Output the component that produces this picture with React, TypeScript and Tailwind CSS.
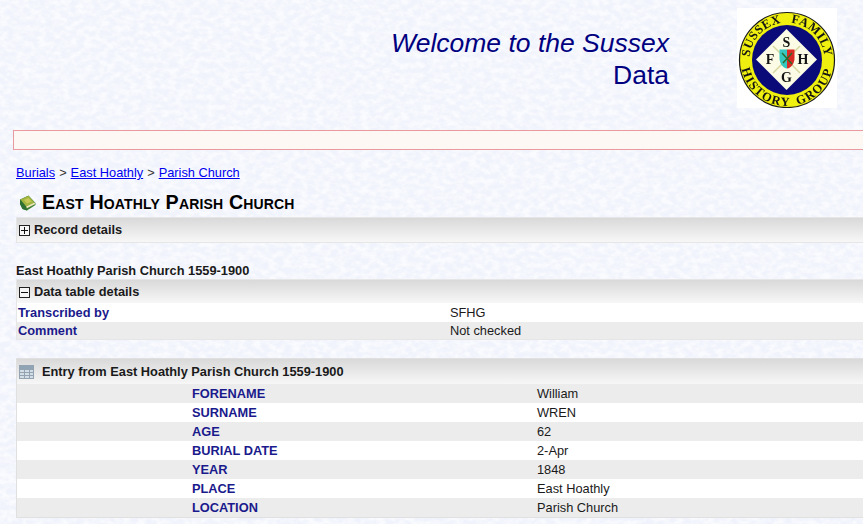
import React from "react";

const Logo = () => (
  <svg width="100" height="100" viewBox="0 0 100 100" className="block blur-[0.4px]">
    <rect width="100" height="100" fill="#fff" />
    <circle cx="50" cy="52" r="47.5" fill="#efef10" stroke="#1a1a1a" strokeWidth="1.2" />
    <circle cx="50" cy="52" r="35" fill="#0a0a78" />
    <polygon points="49.5,21 80,51.5 49.5,82 19,51.5" fill="#fcfce6" />
    <path d="M36 38 L63 65 M63 38 L36 65" stroke="#d6d6a0" strokeWidth="1.5" />
    <path d="M42.5 41.5 H50 V60.5 C46 60 42.5 56 42.5 50 Z" fill="#35c8c0" />
    <path d="M50 41.5 H57.5 V50 C57.5 56 54 60 50 60.5 Z" fill="#d92b25" />
    <path d="M45 45 L55 56 M55 45 L46 55" stroke="#2a6a2a" strokeWidth="1.4" />
    <defs>
      <path id="arcTop" d="M12.5 52 A37.5 37.5 0 0 1 87.5 52" />
      <path id="arcBottom" d="M4 52 A46 46 0 0 0 96 52" />
    </defs>
    <g fontFamily="'Liberation Serif', serif" fontWeight="700" fill="#141414">
      <text fontSize="12.5" letterSpacing="0.5" wordSpacing="6">
        <textPath href="#arcTop" startOffset="50%" textAnchor="middle">SUSSEX FAMILY</textPath>
      </text>
      <text fontSize="12.5" letterSpacing="1.4" wordSpacing="3">
        <textPath href="#arcBottom" startOffset="50%" textAnchor="middle">HISTORY GROUP</textPath>
      </text>
      <g fontSize="14" textAnchor="middle">
        <text x="49.5" y="38.5">S</text>
        <text x="49.5" y="74">G</text>
        <text x="33" y="56">F</text>
        <text x="66" y="56">H</text>
      </g>
    </g>
  </svg>
);

const Book = () => (
  <svg width="17" height="16" viewBox="0 0 17 16" className="block shrink-0">
    <path d="M1 4.5 L9.5 0.5 L16.5 8 L16.5 10 L8 15.5 L3.5 14 L1 9 Z" fill="#3f7f38" />
    <path d="M1.5 4.5 L9.5 0.8 L15.5 7.5 L7 11.5 Z" fill="#a2b53f" />
    <path d="M5 5 L9.5 3 L12.5 6.5 L8 8.5 Z" fill="#c9c95a" />
    <path d="M7 11.5 L15.5 7.5 L16.3 9 L7.8 13.2 Z" fill="#f0e6b8" />
    <path d="M1.2 4.8 L7 11.5 L8 15.5 L3.5 14 L1 9 Z" fill="#2f7033" />
  </svg>
);

const Plus = ({ minus }: { minus?: boolean }) => (
  <svg width="11" height="11" viewBox="0 0 11 11" className="block shrink-0">
    <rect x="0.5" y="0.5" width="10" height="10" fill="#f6f6f6" stroke="#222" />
    <path d={minus ? "M2 5.5 H9" : "M2 5.5 H9 M5.5 2 V9"} stroke="#111" />
  </svg>
);

const TableIcon = () => (
  <svg width="15" height="14" viewBox="0 0 15 14" className="block shrink-0">
    <rect x="0.5" y="0.5" width="14" height="13" fill="#d3dde6" stroke="#93a3b1" />
    <rect x="1" y="1" width="13" height="3" fill="#8fa5b6" />
    <path d="M0.5 4.5 H14.5 M0.5 7.5 H14.5 M0.5 10.5 H14.5 M5.5 1 V13 M10.5 1 V13" stroke="#93a3b1" />
  </svg>
);

const bar = "flex items-center bg-gradient-to-b from-[#d9d9d9] to-[#f7f7f7]";

const details: [string, string][] = [
  ["FORENAME", "William"],
  ["SURNAME", "WREN"],
  ["AGE", "62"],
  ["BURIAL DATE", "2-Apr"],
  ["YEAR", "1848"],
  ["PLACE", "East Hoathly"],
  ["LOCATION", "Parish Church"],
];

export default function App() {
  return (
    <div className="relative w-[863px] h-[524px] overflow-hidden bg-[#f0f3fc] font-['Liberation_Sans',Arial,sans-serif] text-[12.8px] text-[#1a1a1a]">
      <svg className="absolute inset-0 pointer-events-none" width="863" height="524" aria-hidden="true">
        <filter id="paper" x="0" y="0" width="100%" height="100%">
          <feTurbulence type="fractalNoise" baseFrequency="0.13 0.19" numOctaves="3" seed="7" />
          <feColorMatrix values="0 0 0 0 1  0 0 0 0 1  0 0 0 0 1  2.4 0 0 0 -0.8" />
        </filter>
        <rect width="863" height="524" filter="url(#paper)" opacity="0.7" />
      </svg>
      <div className="relative">
        <header className="flex h-[130px] pt-[8px]">
          <div className="w-[669px] pt-[19px] text-right text-[26.5px] leading-[32px] text-[#000080]">
            <div className="italic">Welcome to the Sussex</div>
            <div>Data</div>
          </div>
          <div className="ml-[68px]"><Logo /></div>
        </header>

        <div className="ml-[13px] h-[20px] w-[860px] border border-[#e89a9f] bg-[#fdf8f3]" />

        <nav className="ml-[16px] mt-[14px] flex h-[17px] gap-[4px] leading-[17px] text-[#333]">
          <a className="text-[#0000ee] underline" href="#">Burials</a>
          <span>&gt;</span>
          <a className="text-[#0000ee] underline" href="#">East Hoathly</a>
          <span>&gt;</span>
          <a className="text-[#0000ee] underline" href="#">Parish Church</a>
        </nav>

        <h1 className="ml-[19px] mt-[10px] flex h-[24px] items-center gap-[6px] text-[19.7px] font-bold tracking-[0.16px] text-black [font-variant:small-caps]">
          <Book />
          <span>East Hoathly Parish Church</span>
        </h1>

        <section className="ml-[16px] mt-[2px] w-[860px] border border-[#e6e6e6]">
          <div className={`${bar} h-[24px] gap-[4px] pl-[2px] font-bold`}>
            <Plus />
            <span>Record details</span>
          </div>
        </section>

        <div className="ml-[16px] mt-[19px] h-[17px] leading-[17px] font-bold">East Hoathly Parish Church 1559-1900</div>

        <section className="ml-[16px] w-[860px] border border-[#e6e6e6]">
          <div className={`${bar} h-[23px] gap-[4px] pl-[2px] pt-[1px] font-bold`}>
            <Plus minus />
            <span>Data table details</span>
          </div>
          <div className="flex h-[19px] items-center bg-white pl-[1px] pt-[1px]">
            <span className="w-[432px] font-bold text-[#1a1a8c]">Transcribed by</span>
            <span>SFHG</span>
          </div>
          <div className="flex h-[17px] items-center bg-[#ececec] pl-[1px]">
            <span className="w-[432px] font-bold text-[#1a1a8c]">Comment</span>
            <span>Not checked</span>
          </div>
        </section>

        <section className="ml-[16px] mt-[18px] w-[860px] border border-[#e0e0e0]">
          <div className={`${bar} h-[25px] gap-[8px] pl-[2px] font-bold`}>
            <TableIcon />
            <span>Entry from East Hoathly Parish Church 1559-1900</span>
          </div>
          {details.map(([label, value], i) => (
            <div key={label} className={`flex h-[19px] items-center ${i % 2 === 0 ? "bg-[#ececec]" : "bg-white"}`}>
              <span className="ml-[175px] w-[345px] font-bold text-[#1a1a8c]">{label}</span>
              <span>{value}</span>
            </div>
          ))}
        </section>
      </div>
    </div>
  );
}
